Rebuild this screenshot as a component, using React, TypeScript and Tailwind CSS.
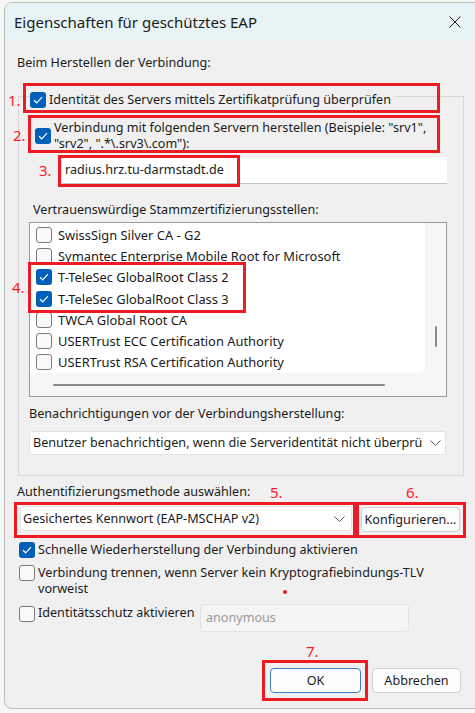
import React from "react"

const font = { fontFamily: '"Noto Sans", "Liberation Sans", sans-serif' }

function Check({ checked }: { checked?: boolean }) {
  if (checked) {
    return (
      <div className="w-[16px] h-[16px] shrink-0 rounded-[3px] bg-[#005fb8] flex items-center justify-center">
        <svg width="10" height="8" viewBox="0 0 10 8" fill="none">
          <path d="M1 4.2 L3.7 6.8 L9 1.2" stroke="white" strokeWidth="1.2" />
        </svg>
      </div>
    )
  }
  return <div className="w-[16px] h-[16px] shrink-0 rounded-[3px] border border-[#7a7a7a] bg-[#f9f9f9]" />
}

function Chevron() {
  return (
    <svg width="11" height="6" viewBox="0 0 11 6" fill="none">
      <path d="M0.5 0.5 L5.5 5.5 L10.5 0.5" stroke="#5f5f5f" strokeWidth="1" />
    </svg>
  )
}

const certs = [
  { name: "SwissSign Silver CA - G2", checked: false },
  { name: "Symantec Enterprise Mobile Root for Microsoft", checked: false },
  { name: "T-TeleSec GlobalRoot Class 2", checked: true },
  { name: "T-TeleSec GlobalRoot Class 3", checked: true },
  { name: "TWCA Global Root CA", checked: false },
  { name: "USERTrust ECC Certification Authority", checked: false },
  { name: "USERTrust RSA Certification Authority", checked: false },
]

export default function App() {
  return (
    <div className="relative w-[475px] h-[713px] overflow-hidden bg-[#f7f7f7] text-[12.6px] leading-[16px] text-[#1b1b1b]" style={font}>
      <div className="ml-[4px] mt-[2px] w-[482px] h-[707px] rounded-lg border border-[#bcbcbc] bg-[#f0f0f0] overflow-hidden flex flex-col">
        {/* title bar */}
        <div className="h-[37px] shrink-0 bg-[#e8f3f6] flex items-center pl-[9px]">
          <span className="text-[15px] leading-[20px]">Eigenschaften für geschütztes EAP</span>
          <svg className="ml-auto mr-[24px]" width="12" height="12" viewBox="0 0 12 12">
            <path d="M0.5 0.5 L11.5 11.5 M11.5 0.5 L0.5 11.5" stroke="#1b1b1b" strokeWidth="1" />
          </svg>
        </div>

        <div className="pl-[12px] mt-[15px]">Beim Herstellen der Verbindung:</div>

        {/* group box */}
        <div className="ml-[13px] mt-[25px] w-[446px] border border-[#d6d6d6] pb-[20px]">
          <div className="-mt-[5px] ml-[11px] w-fit bg-[#f0f0f0] pr-[4px] flex items-center gap-[3px]">
            <Check checked />
            <span>Identität des Servers mittels Zertifikatprüfung überprüfen</span>
          </div>
          <div className="mt-[12px] ml-[16px] flex items-center gap-[3px]">
            <Check checked />
            <span>
              Verbindung mit folgenden Servern herstellen (Beispiele: "srv1",
              <br />
              "srv2", ".*\.srv3\.com"):
            </span>
          </div>
          <div className="mt-[5px] ml-[43px] w-[385px] h-[27px] bg-white border-b border-[#c4c4c4] flex items-center pl-[3px]">
            radius.hrz.tu-darmstadt.de
          </div>
          <div className="mt-[18px] ml-[14px]">Vertrauenswürdige Stammzertifizierungsstellen:</div>
          <div className="mt-[4px] ml-[10px] w-[418px] h-[175px] border border-[#9a9a9a] bg-[#f6f6f6] flex flex-col">
            <div className="flex h-[150px]">
              <div className="w-[395px] bg-white rounded-br-[6px] pt-[1px] text-[12.9px]">
                {certs.map((c) => (
                  <div key={c.name} className="h-[21.3px] flex items-center pl-[6px] gap-[6px]">
                    <Check checked={c.checked} />
                    <span className="whitespace-nowrap">{c.name}</span>
                  </div>
                ))}
              </div>
              <div className="flex-1 flex justify-center pt-[103px]">
                <div className="w-[2px] h-[21px] rounded-full bg-[#8a8a8a]" />
              </div>
            </div>
            <div className="flex-1 flex items-center pl-[23px]">
              <div className="w-[332px] h-[2px] rounded-full bg-[#8a8a8a]" />
            </div>
          </div>
          <div className="mt-[9px] ml-[10px]">Benachrichtigungen vor der Verbindungsherstellung:</div>
          <div className="mt-[9px] ml-[10px] w-[417px] h-[24px] bg-white border border-[#e2e2e2] rounded-[3px] flex items-center pl-[3px] pr-[4px]">
            <span className="w-[390px] overflow-hidden whitespace-nowrap">
              Benutzer benachrichtigen, wenn die Serveridentität nicht überprü
            </span>
            <span className="ml-auto">
              <Chevron />
            </span>
          </div>
        </div>

        <div className="mt-[8px] ml-[12px]">Authentifizierungsmethode auswählen:</div>
        <div className="mt-[6px] ml-[15px] flex items-start gap-[9px]">
          <div className="w-[332px] h-[25px] bg-white border border-[#e2e2e2] rounded-[3px] flex items-center pl-[2px] pr-[6px]">
            <span>Gesichertes Kennwort (EAP-MSCHAP v2)</span>
            <span className="ml-auto">
              <Chevron />
            </span>
          </div>
          <div className="mt-[1px] w-[99px] h-[25px] bg-[#fdfdfd] border border-[#d0d0d0] rounded-[4px] flex items-center justify-center whitespace-nowrap">
            Konfigurieren...
          </div>
        </div>

        <div className="mt-[10px] ml-[14px] flex items-center gap-[3px]">
          <Check checked />
          <span>Schnelle Wiederherstellung der Verbindung aktivieren</span>
        </div>
        <div className="mt-[7px] ml-[14px] flex items-start gap-[3px]">
          <Check />
          <span>
            Verbindung trennen, wenn Server kein Kryptografiebindungs-TLV
            <br />
            vorweist
          </span>
        </div>
        <div className="mt-[7px] ml-[14px] flex items-start">
          <div className="mt-[2px]">
            <Check />
          </div>
          <span className="ml-[3px] mt-[1px] w-[162px] shrink-0 whitespace-nowrap">Identitätsschutz aktivieren</span>
          <div className="w-[209px] h-[28px] bg-[#f4f4f4] border border-[#e3e3e3] rounded-[3px] flex items-center pl-[5px] text-[#9a9a9a]">
            anonymous
          </div>
        </div>

        <div className="mt-[36px] flex justify-end gap-[11px] mr-[24px]">
          <div className="w-[91px] h-[25px] bg-[#fdfdfd] border border-[#3c7fc6] rounded-[4px] flex items-center justify-center">
            OK
          </div>
          <div className="w-[89px] h-[25px] bg-[#fdfdfd] border border-[#d0d0d0] rounded-[4px] flex items-center justify-center">
            Abbrechen
          </div>
        </div>
      </div>

      {/* red annotations */}
      <div className="absolute left-[23px] top-[83px] w-[417px] h-[30px] border-[3px] border-[#ed1c24]" />
      <div className="absolute left-[28px] top-[115px] w-[412px] h-[38px] border-[3px] border-[#ed1c24]" />
      <div className="absolute left-[58px] top-[155px] w-[182px] h-[32px] border-[3px] border-[#ed1c24]" />
      <div className="absolute left-[28px] top-[262px] w-[218px] h-[51px] border-[3px] border-[#ed1c24]" />
      <div className="absolute left-[14px] top-[502px] w-[342px] h-[36px] border-[3px] border-[#ed1c24]" />
      <div className="absolute left-[356px] top-[502px] w-[110px] h-[36px] border-[3px] border-[#ed1c24]" />
      <div className="absolute left-[262px] top-[660px] w-[106px] h-[41px] border-[3px] border-[#ed1c24]" />
      <div className="absolute left-[283px] top-[590px] w-[4px] h-[4px] rounded-full bg-[#ed1c24]" />
      <span className="absolute left-[8px] top-[90px] text-[15px] leading-[20px] text-[#ff1a1a]">1.</span>
      <span className="absolute left-[13px] top-[125px] text-[15px] leading-[20px] text-[#ff1a1a]">2.</span>
      <span className="absolute left-[39px] top-[160px] text-[15px] leading-[20px] text-[#ff1a1a]">3.</span>
      <span className="absolute left-[12px] top-[277px] text-[15px] leading-[20px] text-[#ff1a1a]">4.</span>
      <span className="absolute left-[270px] top-[482px] text-[15px] leading-[20px] text-[#ff1a1a]">5.</span>
      <span className="absolute left-[406px] top-[482px] text-[15px] leading-[20px] text-[#ff1a1a]">6.</span>
      <span className="absolute left-[306px] top-[641px] text-[15px] leading-[20px] text-[#ff1a1a]">7.</span>
    </div>
  )
}
